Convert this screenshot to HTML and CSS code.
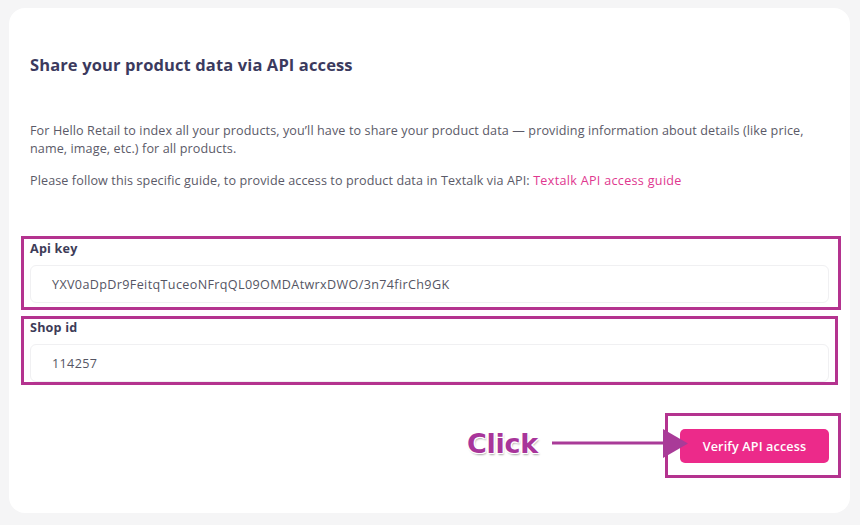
FILE: index.html
```html
<!DOCTYPE html>
<html lang="en">
<head>
<meta charset="utf-8">
<title>Share your product data via API access</title>
<link rel="stylesheet" href="styles.css">
</head>
<body>
<div class="card">
  <h1 class="title">Share your product data via API access</h1>
  <p class="text text-first">For Hello Retail to index all your products, you’ll have to share your product data — providing information about details (like price, name, image, etc.) for all products.</p>
  <p class="text text-second">Please follow this specific guide, to provide access to product data in Textalk via API: <a class="link" href="#">Textalk API access guide</a></p>

  <div class="highlight field field-key">
    <label class="label">Api key</label>
    <div class="input">YXV0aDpDr9FeitqTuceoNFrqQL09OMDAtwrxDWO/3n74firCh9GK</div>
  </div>
  <div class="highlight field field-shop">
    <label class="label">Shop id</label>
    <div class="input">114257</div>
  </div>

  <div class="actions">
    <div class="annotation">
      <span class="click">Click</span>
      <svg class="arrow" width="140" height="32" viewBox="0 0 140 32">
        <line x1="0" y1="15" x2="115" y2="15" stroke="#a93b98" stroke-width="3"/>
        <polygon points="111,1 136,15.5 111,30" fill="#a93b98"/>
      </svg>
    </div>
    <div class="highlight btn-box">
      <button class="btn">Verify API access</button>
    </div>
  </div>
</div>
</body>
</html>
```

FILE: styles.css
```css
html, body {
  margin: 0;
  padding: 0;
}
body {
  background: #f5f5f6;
  font-family: "Open Sans", "Liberation Sans", sans-serif;
  width: 860px;
  height: 525px;
  overflow: hidden;
}
.card {
  box-sizing: border-box;
  margin: 8px 10px 0 9px;
  height: 505px;
  background: #ffffff;
  border-radius: 16px;
  padding: 47px 21px 0 21px;
}
.title {
  margin: 0;
  font-size: 16.5px;
  line-height: 20px;
  font-weight: 700;
  color: #3b3a5e;
  letter-spacing: 0.12px;
}
.text {
  margin: 0;
  font-size: 12.6px;
  line-height: 18px;
  color: #5b5a68;
  letter-spacing: 0.1px;
}
.text-first {
  margin-top: 47px;
}
.text-second {
  margin-top: 14px;
}
.link {
  color: #e0388f;
  text-decoration: none;
  letter-spacing: 0.3px;
}
.highlight {
  border: 3px solid #b4338f;
}
.field {
  display: flex;
  flex-direction: column;
  margin-left: -9px;
  padding-left: 6px;
}
.field-key {
  margin-top: 46px;
  margin-right: -12px;
  padding-right: 9px;
  padding-bottom: 4px;
  padding-top: 2px;
}
.field-shop {
  margin-top: 6px;
  margin-right: -9px;
  padding-right: 6px;
  padding-top: 1px;
}
.label {
  font-size: 12.6px;
  line-height: 16px;
  font-weight: 700;
  color: #3d3c58;
  letter-spacing: 0.2px;
}
.input {
  box-sizing: border-box;
  height: 38px;
  border: 1px solid #f0f0f2;
  border-radius: 6px;
  padding-left: 21px;
  display: flex;
  align-items: center;
  font-size: 12.6px;
  color: #555563;
  letter-spacing: 0.35px;
}
.field-key .input {
  margin-top: 8px;
}
.field-shop .input {
  margin-top: 8px;
}
.actions {
  position: relative;
  display: flex;
  justify-content: flex-end;
  margin-top: 28px;
  margin-right: -12px;
}
.btn-box {
  padding: 13px 9px 12px 12px;
}
.btn {
  display: block;
  width: 149px;
  height: 34px;
  border: none;
  border-radius: 5px;
  background: #ec2a8a;
  color: #ffffff;
  font-family: "Open Sans", "Liberation Sans", sans-serif;
  font-size: 12.6px;
  font-weight: 600;
  letter-spacing: 0.15px;
  cursor: pointer;
}
.annotation {
  position: absolute;
  left: 437px;
  top: 14px;
  display: flex;
  align-items: center;
  z-index: 2;
}
.click {
  font-family: "DejaVu Sans", sans-serif;
  font-weight: 700;
  font-size: 27px;
  line-height: 34px;
  color: #a8359a;
  letter-spacing: -0.3px;
  text-shadow: 1px 0 0 #fff, -1px 0 0 #fff, 0 1px 0 #fff, 0 -1px 0 #fff,
    1px 1px 0 #fff, -1px -1px 0 #fff, 1px -1px 0 #fff, -1px 1px 0 #fff,
    1px 2px 2px rgba(0,0,0,0.35);
}
.arrow {
  margin-left: 14px;
  display: block;
}
```
